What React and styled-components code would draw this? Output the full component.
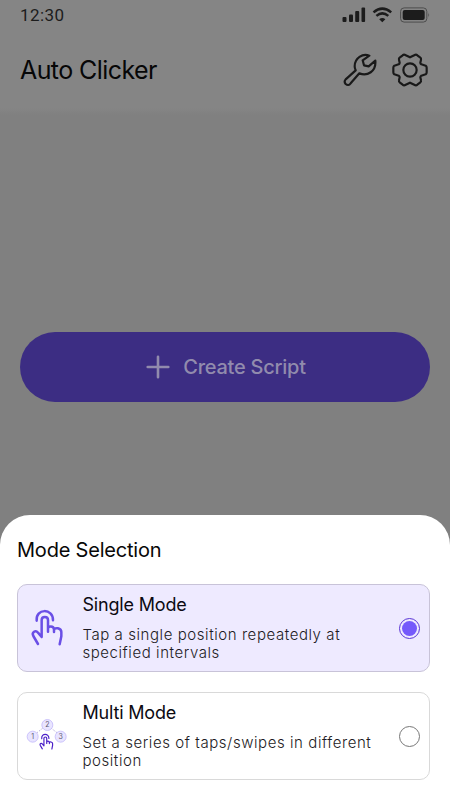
import React, { useState } from 'react';
import styled, { createGlobalStyle } from 'styled-components';

const GlobalStyle = createGlobalStyle`
    * {
        box-sizing: border-box;
    }

    body {
        margin: 0;
        background-color: #808080;
        font-family: Inter, 'Liberation Sans', sans-serif;
    }
`;

const modes = [
    { id: 'single', title: 'Single Mode', text: 'Tap a single position repeatedly at specified intervals' },
    { id: 'multi', title: 'Multi Mode', text: 'Set a series of taps/swipes in different position' },
];

function StatusIcons() {
    return (
        <svg width='90' height='20' viewBox='0 0 90 20'>
            <g fill='#1c1c1c'>
                <rect x='2.5' y='12' width='4' height='5' rx='1' />
                <rect x='9' y='9.5' width='4' height='7.5' rx='1' />
                <rect x='15.2' y='6' width='4' height='11' rx='1' />
                <rect x='21.5' y='2.5' width='3.6' height='14.5' rx='1' />
                <path d='M39.2 14.2Q42.3 12 45.4 14.2L42.3 17.3Z' />
                <rect x='62.7' y='4.9' width='22' height='10.2' rx='2' />
            </g>
            <g fill='none' stroke='#1c1c1c' strokeWidth='2.5'>
                <path d='M33.5 7.4Q42.3 -.1 51.2 7.4' />
                <path d='M36.4 10.9Q42.3 5.9 48.3 10.9' />
            </g>
            <rect x='60.6' y='2.9' width='26.2' height='14.2' rx='3.5' fill='none' stroke='#4d4d4d' />
            <path d='M88.3 7.8Q90 10 88.3 12.2Z' fill='#4d4d4d' />
        </svg>
    );
}

function WrenchIcon() {
    return (
        <svg width='34' height='34' viewBox='39 159 102 102' fill='none' stroke='#191919' strokeWidth='6.5' strokeLinejoin='round'>
            <path d='M118 167C98 159 74 174 74 199Q74 205 77 211L47 238Q41 245 47 252Q55 259 62 250L88 220C112 230 139 214 136 182L116 199L102 196L98 181Z' />
        </svg>
    );
}

function GearIcon() {
    return (
        <svg width='36' height='34' viewBox='186 159 108 102' fill='none' stroke='#191919' strokeWidth='6.5' strokeLinejoin='round'>
            <path d='M224 164L240 172L256 164Q259 163 262 166L271 173Q274 175 273 179L271 188Q271 191 274 193L287 197Q290 199 290 203V217Q290 221 287 223L274 227Q271 229 271 232L273 241Q274 245 271 247L262 254Q259 257 256 256L240 248L224 256Q221 257 218 254L209 247Q206 245 207 241L209 232Q209 229 206 227L193 223Q190 221 190 217V203Q190 199 193 197L206 193Q209 191 209 188L207 179Q206 175 209 173L218 166Q221 163 224 164Z' />
            <circle cx='240' cy='210' r='20' />
        </svg>
    );
}

// finger with a tap arc above it
function TapShape() {
    return (
        <>
            <path d='M80 120C76 82 130 82 129 119' />
            <path d='M84 190L70 166C64 155 77 147 84 156L95 169V118C95 106 114 106 114 118V153V145C114 135 131 135 132 146V154V149C134 138 154 142 154 154V167L149 191' />
        </>
    );
}

function SingleIcon() {
    return (
        <svg width='60' height='44' viewBox='24 76 180 132' fill='none' stroke='#6a4fe6' strokeWidth='7.5' strokeLinecap='round' strokeLinejoin='round'>
            <TapShape />
        </svg>
    );
}

function MultiIcon() {
    const points = [
        { n: 1, x: 68, y: 153 },
        { n: 2, x: 112, y: 118 },
        { n: 3, x: 152, y: 153 },
    ];
    return (
        <svg width='60' height='44' viewBox='24 85 180 132'>
            <path d='M80 142L100 126M123 127L142 142' stroke='#aaa2d4' strokeWidth='2.5' strokeDasharray='5 4' />
            {points.map(p => (
                <g key={p.n}>
                    <circle cx={p.x} cy={p.y} r='16.5' fill='#e9e5ff' stroke='#c4bafa' strokeWidth='2.5' />
                    <Digit x={p.x} y={p.y + 7}>{p.n}</Digit>
                </g>
            ))}
            <g transform='translate(60 106) scale(.44)' fill='none' stroke='#4b20c8' strokeWidth='8' strokeLinecap='round' strokeLinejoin='round'>
                <TapShape />
            </g>
        </svg>
    );
}

function App() {
    const [selected, setSelected] = useState('single');

    return (
        <Screen>
            <GlobalStyle />
            <Header>
                <StatusBar>
                    <Time>12:30</Time>
                    <StatusIcons />
                </StatusBar>
                <TitleBar>
                    <Title>Auto Clicker</Title>
                    <Actions>
                        <WrenchIcon />
                        <GearIcon />
                    </Actions>
                </TitleBar>
            </Header>

            <Content>
                <CreateButton>
                    <svg width='24' height='24' viewBox='0 0 24 24' stroke='#918bad' strokeWidth='2.6' strokeLinecap='round'>
                        <path d='M12 1.7V22.3M1.7 12H22.3' />
                    </svg>
                    Create Script
                </CreateButton>
            </Content>

            <Sheet>
                <SheetTitle>Mode Selection</SheetTitle>
                {modes.map(mode => (
                    <ModeCard key={mode.id} $active={selected === mode.id} onClick={() => setSelected(mode.id)}>
                        {mode.id === 'single' ? <SingleIcon /> : <MultiIcon />}
                        <ModeInfo>
                            <ModeTitle>{mode.title}</ModeTitle>
                            <ModeText>{mode.text}</ModeText>
                        </ModeInfo>
                        <Radio $active={selected === mode.id} />
                    </ModeCard>
                ))}
            </Sheet>
        </Screen>
    );
}

export default App;


const Screen = styled.div`
    display: flex;
    flex-direction: column;
    width: 450px;
    height: 800px;
    overflow: hidden;
    background-color: #808080;
`;

const Header = styled.header`
    height: 115px;
    background: linear-gradient(#858585 108px, #808080);
`;

const StatusBar = styled.div`
    display: flex;
    align-items: center;
    justify-content: space-between;
    height: 30px;
    padding: 0 20px;
`;

const Time = styled.span`
    font-family: Roboto, sans-serif;
    font-size: 17px;
    letter-spacing: 0.4px;
    color: #1c1c1c;
`;

const TitleBar = styled.div`
    display: flex;
    align-items: center;
    justify-content: space-between;
    height: 80px;
    padding: 0 22px 0 20px;
`;

const Title = styled.h1`
    margin: 0;
    font-size: 25px;
    font-weight: 400;
    letter-spacing: -0.58px;
    color: #070707;
`;

const Actions = styled.div`
    display: flex;
    gap: 15px;
`;

const Content = styled.main`
    display: flex;
    flex-direction: column;
    flex: 1;
    padding: 217px 20px 0;
`;

const CreateButton = styled.button`
    display: flex;
    align-items: center;
    justify-content: center;
    gap: 13px;
    height: 70px;
    padding: 0 0 0 2px;
    border: none;
    border-radius: 35px;
    background-color: #3c2d83;
    color: #918bad;
    font-family: inherit;
    font-size: 20px;
    font-weight: 500;
    letter-spacing: -0.25px;
    cursor: pointer;
`;

const Sheet = styled.section`
    height: 285px;
    padding: 20px 20px 0 17px;
    border-radius: 30px 30px 0 0;
    background-color: #fff;
`;

const SheetTitle = styled.h2`
    margin: 0 0 19px;
    font-size: 20px;
    font-weight: 400;
    line-height: 30px;
    letter-spacing: -0.2px;
    color: #080808;
`;

const ModeCard = styled.div`
    display: flex;
    align-items: center;
    height: 88px;
    padding: 0 9px 0 0;
    margin-bottom: 20px;
    border: 1px solid ${props => props.$active ? '#c8c3d8' : '#d9d9d9'};
    border-radius: 10px;
    background-color: ${props => props.$active ? '#eeeaff' : '#fff'};
    cursor: pointer;
`;

const ModeInfo = styled.div`
    flex: 1;
    margin-left: 4.4px;
`;

const ModeTitle = styled.h3`
    margin: 0 0 10px;
    font-size: 18px;
    font-weight: 400;
    line-height: 22px;
    letter-spacing: -0.16px;
    color: #0c0a12;
`;

const ModeText = styled.p`
    width: 300px;
    margin: 0;
    font-size: 15px;
    font-weight: 300;
    line-height: 18px;
    letter-spacing: 0.57px;
    color: #1d1b24;
`;

const Radio = styled.span`
    width: 21px;
    height: 21px;
    border: 1px solid ${props => props.$active ? '#5a35d6' : '#777'};
    border-radius: 50%;
    padding: 2px;
    background: ${props => props.$active ? '#7459fb' : 'none'} content-box;
`;

const Digit = styled.text`
    font-size: 21px;
    text-anchor: middle;
    fill: #5d5871;
`;
